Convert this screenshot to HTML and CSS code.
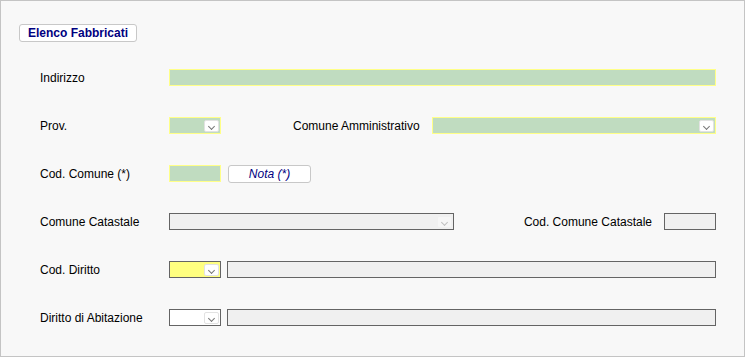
FILE: index.html
```html
<!DOCTYPE html>
<html lang="it">
<head>
    <meta charset="UTF-8">
    <title>Elenco Fabbricati</title>
    <link rel="stylesheet" href="styles.css">
</head>
<body>
    <div class="frame">
        <div class="toolbar">
            <button class="btn btn-title">Elenco Fabbricati</button>
        </div>

        <div class="form">
            <div class="row">
                <span class="lbl">Indirizzo</span>
                <span class="field req wide"></span>
            </div>

            <div class="row">
                <span class="lbl">Prov.</span>
                <span class="field req small sel"><i class="dd"></i></span>
                <span class="lbl lbl-mid">Comune Amministrativo</span>
                <span class="field req grow sel"><i class="dd"></i></span>
            </div>

            <div class="row">
                <span class="lbl">Cod. Comune (*)</span>
                <span class="field req small"></span>
                <button class="btn btn-nota">Nota (*)</button>
            </div>

            <div class="row">
                <span class="lbl">Comune Catastale</span>
                <span class="field off mid sel"><i class="dd dd-off"></i></span>
                <span class="lbl lbl-right">Cod. Comune Catastale</span>
                <span class="field off small"></span>
            </div>

            <div class="row">
                <span class="lbl">Cod. Diritto</span>
                <span class="field yellow small sel"><i class="dd"></i></span>
                <span class="field off grow gap"></span>
            </div>

            <div class="row">
                <span class="lbl">Diritto di Abitazione</span>
                <span class="field white small sel"><i class="dd"></i></span>
                <span class="field off grow gap"></span>
            </div>
        </div>
    </div>
</body>
</html>
```

FILE: styles.css
```css
body {
    margin: 0;
    padding: 0;
    background: #f8f8f8;
    font-family: "Liberation Sans", Arial, sans-serif;
    font-size: 12px;
    color: #000;
}

.frame {
    width: 745px;
    height: 357px;
    box-sizing: border-box;
    border: 1px solid #c4c4c4;
}

.toolbar {
    padding: 23px 0 0 18px;
}

.btn {
    font-family: "Liberation Sans", Arial, sans-serif;
    font-size: 12px;
    background: #fff;
    border: 1px solid #c8c8c8;
    border-radius: 3px;
    color: #000080;
    padding: 0;
    margin: 0;
}

.btn-title {
    width: 118px;
    height: 18px;
    font-weight: bold;
}

.btn-nota {
    width: 83px;
    height: 18px;
    font-style: italic;
    margin-left: 7px;
}

.form {
    padding: 27px 28px 0 39px;
}

.row {
    display: flex;
    align-items: center;
    height: 17px;
    margin-bottom: 31px;
}

.lbl {
    width: 129px;
    flex: none;
    white-space: nowrap;
}

.lbl-mid {
    margin-left: 72px;
    width: 139px;
}

.lbl-right {
    margin-left: auto;
    width: auto;
    margin-right: 12px;
}

.field {
    box-sizing: border-box;
    height: 17px;
    border: 1px solid #646464;
    flex: none;
    position: relative;
}

.req {
    background: #c0dcc0;
    border-color: #ffff88;
}

.off {
    background: #f0f0f0;
}

.yellow {
    background: #ffff80;
}

.white {
    background: #fff;
}

.wide {
    flex: 1;
}

.grow {
    flex: 1;
}

.gap {
    margin-left: 6px;
}

.small {
    width: 52px;
}

.mid {
    width: 285px;
}

/* dropdown arrow box */
.dd {
    position: absolute;
    right: 1px;
    top: 2px;
    width: 15px;
    height: 12px;
    box-sizing: border-box;
    background: #fff;
    border: 1px solid #e2e2e2;
    border-radius: 2px;
}

.dd::after {
    content: "";
    position: absolute;
    left: 4px;
    top: 3px;
    width: 4px;
    height: 4px;
    border-right: 1px solid #777;
    border-bottom: 1px solid #777;
    transform: rotate(45deg);
}

.dd-off {
    background: #f6f6f6;
    border-color: #f0f0f0;
}

.dd-off::after {
    border-color: #c0c0c0;
}
```
